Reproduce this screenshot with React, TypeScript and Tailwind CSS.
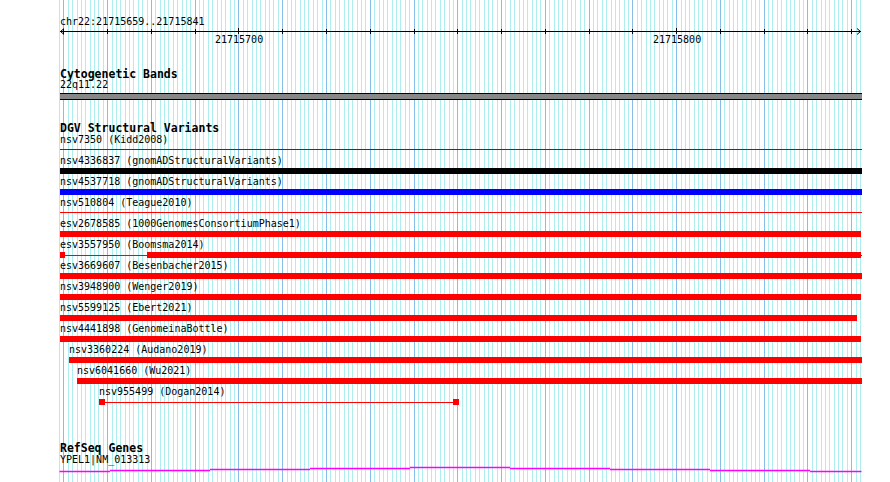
import React from "react";

const X0 = 59.5;
const BW = 801 / 183;

type Row = {
  label: string;
  labelCls: string;
  kind: "bar" | "line" | "split" | "ends";
  box: string;
  color: string;
};

const rows: Row[] = [
  { label: "nsv7350 (Kidd2008)", labelCls: "ml-[60px]", kind: "line", box: "ml-[60px] w-[802px]", color: "bg-[#402080]" },
  { label: "nsv4336837 (gnomADStructuralVariants)", labelCls: "ml-[60px]", kind: "bar", box: "ml-[60px] w-[802px]", color: "bg-black" },
  { label: "nsv4537718 (gnomADStructuralVariants)", labelCls: "ml-[60px]", kind: "bar", box: "ml-[60px] w-[802px]", color: "bg-[#0000ff]" },
  { label: "nsv510804 (Teague2010)", labelCls: "ml-[60px]", kind: "line", box: "ml-[60px] w-[802px]", color: "bg-[#ff0000]" },
  { label: "esv2678585 (1000GenomesConsortiumPhase1)", labelCls: "ml-[60px]", kind: "bar", box: "ml-[60px] w-[801px]", color: "bg-[#ff0000]" },
  { label: "esv3557950 (Boomsma2014)", labelCls: "ml-[60px]", kind: "split", box: "ml-[60px] w-[802px]", color: "bg-[#ff0000]" },
  { label: "esv3669607 (Besenbacher2015)", labelCls: "ml-[60px]", kind: "bar", box: "ml-[60px] w-[802px]", color: "bg-[#ff0000]" },
  { label: "nsv3948900 (Wenger2019)", labelCls: "ml-[60px]", kind: "bar", box: "ml-[60px] w-[801px]", color: "bg-[#ff0000]" },
  { label: "nsv5599125 (Ebert2021)", labelCls: "ml-[60px]", kind: "bar", box: "ml-[60px] w-[797px]", color: "bg-[#ff0000]" },
  { label: "nsv4441898 (GenomeinaBottle)", labelCls: "ml-[60px]", kind: "bar", box: "ml-[60px] w-[801px]", color: "bg-[#ff0000]" },
  { label: "nsv3360224 (Audano2019)", labelCls: "ml-[69px]", kind: "bar", box: "ml-[69px] w-[793px]", color: "bg-[#ff0000]" },
  { label: "nsv6041660 (Wu2021)", labelCls: "ml-[77px]", kind: "bar", box: "ml-[77px] w-[785px]", color: "bg-[#ff0000]" },
  { label: "nsv955499 (Dogan2014)", labelCls: "ml-[99px]", kind: "ends", box: "ml-[99px] w-[360px]", color: "bg-[#ff0000]" },
];

function Grid() {
  const lines = Array.from({ length: 184 }, (_, i) => i);
  return (
    <svg className="absolute inset-0" width={890} height={482} shapeRendering="crispEdges">
      {lines.map((i) => (
        <rect
          key={i}
          x={Math.floor(X0 + i * BW)}
          y={0}
          width={1}
          height={482}
          fill={i % 10 === 1 ? "#87bde9" : "#aeeeee"}
        />
      ))}
    </svg>
  );
}

function Ruler() {
  const ticks = Array.from({ length: 19 }, (_, k) => 1 + k * 10);
  return (
    <svg className="block overflow-visible" width={890} height={6}>
      <rect x={60} y={3} width={801} height={1} fill="#000" shapeRendering="crispEdges" />
      {ticks.map((i) => (
        <rect
          key={i}
          x={Math.floor(X0 + i * BW)}
          y={i === 41 || i === 141 ? 0 : 1}
          width={1}
          height={i === 41 || i === 141 ? 6 : 5}
          fill="#000"
          shapeRendering="crispEdges"
        />
      ))}
      <polyline points="64,0.5 60.5,3.5 64,6.5" fill="none" stroke="#000" strokeWidth={1} />
      <polyline points="857,0.5 860.5,3.5 857,6.5" fill="none" stroke="#000" strokeWidth={1} />
    </svg>
  );
}

function GeneLine() {
  const segs: [number, number, number][] = [
    [59.5, 110, 6],
    [110, 210, 5],
    [210, 310, 4],
    [310, 410, 3],
    [410, 510, 2],
    [510, 610, 3],
    [610, 710, 4],
    [710, 810, 5],
    [810, 861.5, 6],
  ];
  return (
    <svg className="block" width={890} height={10}>
      {segs.map(([a, b, y], k) => (
        <line key={k} x1={a} x2={b} y1={y + 0.5} y2={y + 0.5} stroke="#ff00ff" strokeWidth={1.5} />
      ))}
    </svg>
  );
}

function Feature({ row }: { row: Row }) {
  if (row.kind === "bar") {
    return <div className={`h-[6px] ${row.box} ${row.color}`} />;
  }
  if (row.kind === "line") {
    return (
      <div className={`h-[6px] ${row.box} flex flex-col pt-[2px]`}>
        <div className={`h-px w-full ${row.color}`} />
      </div>
    );
  }
  if (row.kind === "split") {
    return (
      <div className={`h-[6px] ${row.box} flex items-center`}>
        <div className="h-[6px] w-[5px] bg-[#ff0000]" />
        <div className="h-px w-[82px] bg-[#ff0000]" />
        <div className="h-[6px] w-[714px] bg-[#ff0000]" />
        <div className="h-px w-px bg-[#ff0000]" />
      </div>
    );
  }
  return (
    <div className={`h-[6px] ${row.box} flex items-center`}>
      <div className="h-[6px] w-[6px] bg-[#ff0000]" />
      <div className="h-px w-[348px] bg-[#ff0000]" />
      <div className="h-[6px] w-[6px] bg-[#ff0000]" />
    </div>
  );
}

export default function App() {
  const mono = "font-['DejaVu_Sans_Mono',monospace]";
  return (
    <div className={`relative w-[890px] h-[482px] overflow-hidden bg-white text-black ${mono}`}>
      <Grid />
      <div className="relative flex flex-col pt-[16px]">
        <div className="ml-[60px] h-[12px] text-[10px] leading-[12px] whitespace-nowrap">chr22:21715659..21715841</div>
        <Ruler />
        <div className="flex h-[12px] text-[10px] leading-[12px] whitespace-nowrap">
          <span className="ml-[215px] w-[48px] text-center">21715700</span>
          <span className="ml-[390px] w-[48px] text-center">21715800</span>
        </div>

        <div className="ml-[60px] mt-[22px] h-[12px] text-[11.5px] leading-[12px] font-bold whitespace-nowrap">Cytogenetic Bands</div>
        <div className="ml-[60px] h-[10px] text-[10px] leading-[10px] whitespace-nowrap">22q11.22</div>
        <div className="ml-[60px] mt-[3px] w-[802px] h-[7px] bg-[#878787] border-y border-black" />

        <div className="ml-[60px] mt-[22px] h-[12px] text-[11.5px] leading-[12px] font-bold whitespace-nowrap">DGV Structural Variants</div>
        <div className="mt-[1px] flex flex-col">
          {rows.map((r) => (
            <div key={r.label} className="h-[21px] flex flex-col">
              <div className={`h-[10px] text-[10px] leading-[10px] whitespace-nowrap ${r.labelCls}`}>{r.label}</div>
              <div className="mt-[2px]">
                <Feature row={r} />
              </div>
            </div>
          ))}
        </div>

        <div className="ml-[60px] mt-[34px] h-[12px] text-[11.5px] leading-[12px] font-bold whitespace-nowrap">RefSeq Genes</div>
        <div className="ml-[60px] mt-[1px] h-[10px] text-[10px] leading-[10px] whitespace-nowrap">YPEL1|NM_013313</div>
        <GeneLine />
      </div>
    </div>
  );
}
